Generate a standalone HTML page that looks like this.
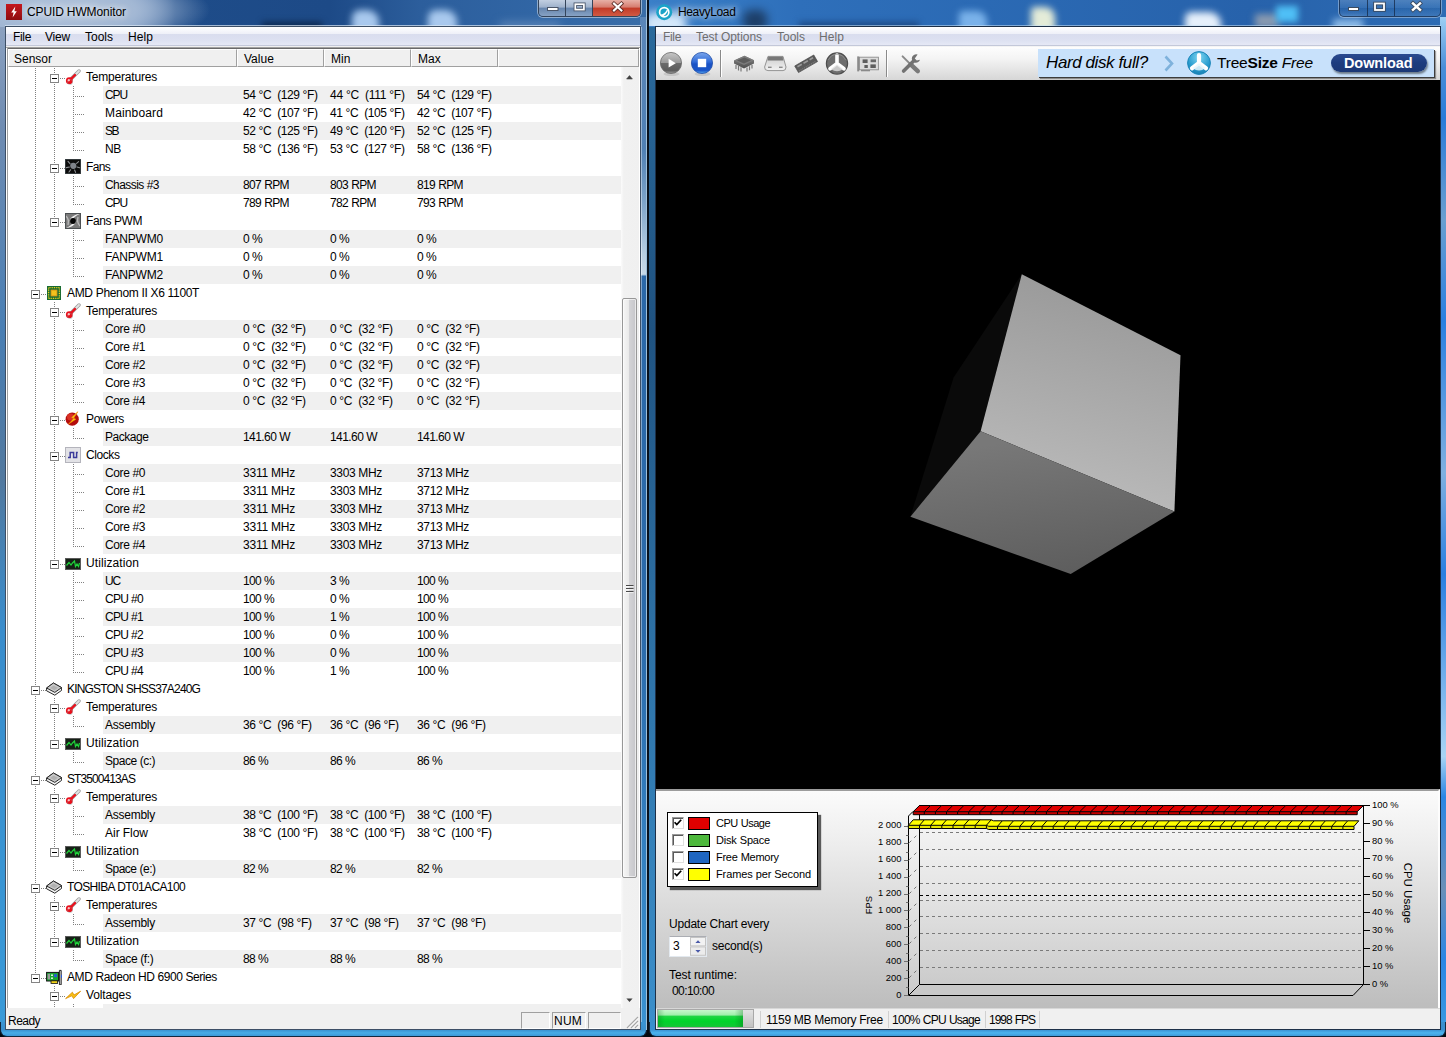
<!DOCTYPE html>
<html><head><meta charset="utf-8"><title>Desktop</title>
<style>
html,body{margin:0;padding:0}
body{width:1446px;height:1037px;position:relative;overflow:hidden;background:#05090f;font:12px/16px "Liberation Sans",sans-serif;color:#000}
div,span,svg{position:absolute;box-sizing:border-box}
.t{white-space:pre;line-height:16px;height:16px}
.g{background:#f0f0f0;left:103px;width:518px;height:18px}
.vl{width:1px;background-image:repeating-linear-gradient(to bottom,#808080 0 1px,transparent 1px 2px)}
.hl{height:1px;background-image:repeating-linear-gradient(to right,#808080 0 1px,transparent 1px 2px)}
.bx{width:9px;height:9px;border:1px solid #848484;background:#fff}
.bx:after{content:"";position:absolute;left:1px;top:3px;width:5px;height:1px;background:#000}
.hc{top:49px;height:18px;background:#f0f0f0;border-left:1px solid #fff;border-top:1px solid #fff;border-right:1px solid #a0a0a0;border-bottom:1px solid #a0a0a0}
.pane{top:1012px;height:17px;border-left:1px solid #a0a0a0;border-top:1px solid #a0a0a0;border-right:1px solid #fff;border-bottom:1px solid #fff}
.menu{height:19px;background:linear-gradient(to bottom,#fff 0,#f9fafd 12%,#eef0f8 36%,#d9ddee 38%,#dde1f1 70%,#e5e8f5 94%,#c3c8d9 95%,#c3c8d9 100%)}
</style></head><body>
<div id="lw" style="left:0;top:0;width:647px;height:1030px;background:
radial-gradient(ellipse 150px 40px at 60px 10px,#b4c5dc 0,#a3b8d4 50%,rgba(150,175,210,0) 100%),
linear-gradient(to right,#8fa9cc 0,#7c9ac4 130px,#1e4c89 175px,#1d4a87 330px,#2c5e9c 420px,#3166a5 540px,#3a6ea8 647px);"></div><div style="left:0;top:0;width:647px;height:26px;overflow:hidden"><div style="left:352px;top:10px;width:27px;height:22px;background:#a9c9ee;filter:blur(3.5px);border-radius:8px 12px 0 0"></div><div style="left:428px;top:10px;width:29px;height:22px;background:#a9c9ee;filter:blur(3.5px);border-radius:8px 12px 0 0"></div><div style="left:262px;top:22px;width:60px;height:8px;background:#0e2a50;filter:blur(3px)"></div><div style="left:500px;top:22px;width:60px;height:8px;background:#5d86b8;filter:blur(4px)"></div></div><div style="left:0;top:27px;width:6px;height:1003px;background:linear-gradient(to bottom,#8ba1c0 0,#6f8cb2 10%,#4a7fb4 30%,#52799f 45%,#3a8dcc 60%,#3a9ad8 100%)"></div><div style="left:640px;top:17px;width:7px;height:1013px;background:linear-gradient(to bottom,#5b86b8 0,#4f80b4 13%,#7ba2c8 18%,#b9cfe2 23.5%,#c6d8e8 25.4%,#2b68a8 25.6%,#2b6aaa 60%,#3a92d2 100%)"></div><div style="left:641px;top:27px;width:1px;height:1003px;background:rgba(255,255,255,.4)"></div><div style="left:0;top:1022px;width:647px;height:15px;background:linear-gradient(to bottom,#3a94d4 0,#3a8fce 55%,#49acE6 78%,#3d98d8 100%);border-radius:0 0 7px 7px;border:1px solid #14283e;border-top:none"></div><div style="left:646px;top:0;width:3px;height:1030px;background:linear-gradient(to right,#9fc0dc 0,#9fc0dc 33%,#08111c 34%,#08111c 100%)"></div><div style="left:5px;top:26px;width:636px;height:1004px;border:1px solid #3d4f66;background:#fff"></div><div style="left:5px;top:25px;width:636px;height:1px;background:rgba(220,232,245,.7)"></div><svg style="left:6px;top:4px" width="16" height="16" viewBox="0 0 16 16"><defs><linearGradient id="ri" x1="0" y1="0" x2="0" y2="1"><stop offset="0" stop-color="#c4161c"/><stop offset="1" stop-color="#8e0c10"/></linearGradient></defs><rect width="16" height="16" fill="url(#ri)"/><path d="M9.3 2.6 L5.2 8.6 L7.6 8.6 L6.6 13.4 L10.8 7.2 L8.4 7.2 Z" fill="#fff"/></svg><span class="t " style="left:27px;top:4px;letter-spacing:-0.10px;word-spacing:-0.24px;text-shadow:0 0 6px rgba(255,255,255,.9),0 0 10px rgba(255,255,255,.7);">CPUID HWMonitor</span><div style="left:538px;top:0;width:103px;height:17px;border:1px solid #34445a;border-top:none;border-radius:0 0 5px 5px;overflow:hidden;box-shadow:0 0 0 1px rgba(255,255,255,.45)">
<div style="left:0;top:0;width:27px;height:16px;background:linear-gradient(to bottom,#c2cfe1 0,#9fb2cc 45%,#6685ad 50%,#87a2c4 100%);border-right:1px solid #34445a"></div>
<div style="left:27px;top:0;width:27px;height:16px;background:linear-gradient(to bottom,#c2cfe1 0,#9fb2cc 45%,#6685ad 50%,#87a2c4 100%);border-right:1px solid #34445a"></div>
<div style="left:54px;top:0;width:48px;height:16px;background:linear-gradient(to bottom,#e7b0a6 0,#d67c6e 45%,#c23a27 50%,#d15a43 100%)"></div>
</div><svg style="left:538px;top:0" width="103" height="17" viewBox="0 0 103 17"><rect x="9.5" y="7.5" width="10.5" height="3" fill="#fff" stroke="#4a5568" stroke-width="1"/><rect x="37.3" y="4.2" width="8.6" height="5.4" fill="none" stroke="#4a5568" stroke-width="3.4"/><rect x="37.3" y="4.2" width="8.6" height="5.4" fill="none" stroke="#fff" stroke-width="1.7"/><path d="M76 3.6 L83.4 10.4 M83.4 3.6 L76 10.4" stroke="#5a2a24" stroke-width="3.8" stroke-linecap="square"/><path d="M76 3.6 L83.4 10.4 M83.4 3.6 L76 10.4" stroke="#fff" stroke-width="2.1" stroke-linecap="square"/></svg><div class="menu" style="left:6px;top:27px;width:634px"></div><div style="left:6px;top:46px;width:634px;height:1px;background:#f0f0f0"></div><span class="t " style="left:13px;top:29px;letter-spacing:-0.34px;">File</span><span class="t " style="left:45px;top:29px;letter-spacing:-0.20px;">View</span><span class="t " style="left:85px;top:29px;letter-spacing:-0.00px;">Tools</span><span class="t " style="left:128px;top:29px;letter-spacing:0.08px;">Help</span><div style="left:6px;top:47px;width:634px;height:1px;background:#a0a0a0"></div><div style="left:7px;top:48px;width:632px;height:1px;background:#696969"></div><div style="left:7px;top:48px;width:1px;height:961px;background:#a0a0a0"></div><div class="hc" style="left:8px;width:229px"></div><span class="t" style="left:14px;top:51px">Sensor</span><div class="hc" style="left:237px;width:87px"></div><span class="t" style="left:244px;top:51px">Value</span><div class="hc" style="left:324px;width:87px"></div><span class="t" style="left:331px;top:51px">Min</span><div class="hc" style="left:411px;width:87px"></div><span class="t" style="left:418px;top:51px">Max</span><div class="hc" style="left:498px;width:141px"></div><div id="list" style="left:8px;top:67px;width:631px;height:941px;overflow:hidden;background:#fff"><div class="g" style="left:95px;top:19px"></div><div class="g" style="left:95px;top:55px"></div><div class="g" style="left:95px;top:109px"></div><div class="g" style="left:95px;top:163px"></div><div class="g" style="left:95px;top:199px"></div><div class="g" style="left:95px;top:253px"></div><div class="g" style="left:95px;top:289px"></div><div class="g" style="left:95px;top:325px"></div><div class="g" style="left:95px;top:361px"></div><div class="g" style="left:95px;top:397px"></div><div class="g" style="left:95px;top:433px"></div><div class="g" style="left:95px;top:469px"></div><div class="g" style="left:95px;top:505px"></div><div class="g" style="left:95px;top:541px"></div><div class="g" style="left:95px;top:577px"></div><div class="g" style="left:95px;top:649px"></div><div class="g" style="left:95px;top:685px"></div><div class="g" style="left:95px;top:739px"></div><div class="g" style="left:95px;top:793px"></div><div class="g" style="left:95px;top:847px"></div><div class="g" style="left:95px;top:883px"></div><div class="g" style="left:95px;top:937px"></div><div class="vl" style="left:27px;top:-1px;height:913px"></div><div class="vl" style="left:46px;top:-1px;height:157px"></div><div class="vl" style="left:46px;top:235px;height:263px"></div><div class="vl" style="left:46px;top:631px;height:47px"></div><div class="vl" style="left:46px;top:721px;height:65px"></div><div class="vl" style="left:46px;top:829px;height:47px"></div><div class="vl" style="left:46px;top:919px;height:24px"></div><div class="vl" style="left:65px;top:19px;height:65px"></div><div class="vl" style="left:65px;top:109px;height:29px"></div><div class="vl" style="left:65px;top:163px;height:47px"></div><div class="vl" style="left:65px;top:253px;height:83px"></div><div class="vl" style="left:65px;top:361px;height:11px"></div><div class="vl" style="left:65px;top:397px;height:83px"></div><div class="vl" style="left:65px;top:505px;height:101px"></div><div class="vl" style="left:65px;top:649px;height:11px"></div><div class="vl" style="left:65px;top:685px;height:11px"></div><div class="vl" style="left:65px;top:739px;height:29px"></div><div class="vl" style="left:65px;top:793px;height:11px"></div><div class="vl" style="left:65px;top:847px;height:11px"></div><div class="vl" style="left:65px;top:883px;height:11px"></div><div class="vl" style="left:65px;top:937px;height:6px"></div><div class="hl" style="left:52px;top:11px;width:5px"></div><div class="bx" style="left:42px;top:7px"></div><svg style="left:57px;top:2px" width="16" height="16" viewBox="0 0 16 16"><path d="M5.2 10.8 L14 2" stroke="#9a9a9a" stroke-width="3.4" stroke-linecap="round"/><path d="M5.2 10.8 L14 2" stroke="#e4e4e4" stroke-width="1.8" stroke-linecap="round"/><path d="M5 11 L10 6" stroke="#e8101c" stroke-width="2.4" stroke-linecap="round"/><circle cx="4.3" cy="11.7" r="3.4" fill="#ea0f1b"/><circle cx="5" cy="13" r="2.6" fill="none" stroke="#8c8c8c" stroke-width=".7" opacity=".6"/><path d="M2.6 11.2h2.4M3.8 10v2.4" stroke="#ffd0d0" stroke-width="1"/></svg><span class="t " style="left:78px;top:2px;letter-spacing:-0.20px;">Temperatures</span><div class="hl" style="left:65px;top:29px;width:11px"></div><span class="t " style="left:97px;top:20px;letter-spacing:-1.11px;">CPU</span><span class="t " style="left:235px;top:20px;letter-spacing:-0.40px;word-spacing:0.06px;">54 °C  (129 °F)</span><span class="t " style="left:322px;top:20px;letter-spacing:-0.23px;word-spacing:-0.10px;">44 °C  (111 °F)</span><span class="t " style="left:409px;top:20px;letter-spacing:-0.40px;word-spacing:0.06px;">54 °C  (129 °F)</span><div class="hl" style="left:65px;top:47px;width:11px"></div><span class="t " style="left:97px;top:38px;letter-spacing:0.14px;">Mainboard</span><span class="t " style="left:235px;top:38px;letter-spacing:-0.40px;word-spacing:0.06px;">42 °C  (107 °F)</span><span class="t " style="left:322px;top:38px;letter-spacing:-0.40px;word-spacing:0.06px;">41 °C  (105 °F)</span><span class="t " style="left:409px;top:38px;letter-spacing:-0.40px;word-spacing:0.06px;">42 °C  (107 °F)</span><div class="hl" style="left:65px;top:65px;width:11px"></div><span class="t " style="left:97px;top:56px;letter-spacing:-1.51px;">SB</span><span class="t " style="left:235px;top:56px;letter-spacing:-0.40px;word-spacing:0.06px;">52 °C  (125 °F)</span><span class="t " style="left:322px;top:56px;letter-spacing:-0.40px;word-spacing:0.06px;">49 °C  (120 °F)</span><span class="t " style="left:409px;top:56px;letter-spacing:-0.40px;word-spacing:0.06px;">52 °C  (125 °F)</span><div class="hl" style="left:65px;top:83px;width:11px"></div><span class="t " style="left:97px;top:74px;letter-spacing:-0.34px;">NB</span><span class="t " style="left:235px;top:74px;letter-spacing:-0.40px;word-spacing:0.06px;">58 °C  (136 °F)</span><span class="t " style="left:322px;top:74px;letter-spacing:-0.40px;word-spacing:0.06px;">53 °C  (127 °F)</span><span class="t " style="left:409px;top:74px;letter-spacing:-0.40px;word-spacing:0.06px;">58 °C  (136 °F)</span><div class="hl" style="left:52px;top:101px;width:5px"></div><div class="bx" style="left:42px;top:97px"></div><svg style="left:57px;top:92px" width="16" height="16" viewBox="0 0 16 16"><rect x="0" y="0" width="16" height="15" rx=".8" fill="#0c0c0c"/><rect x=".5" y=".5" width="15" height="14" fill="none" stroke="#3c4448" stroke-width=".8"/><path d="M3 2.4 L5 4.6 M13.6 2.6 L11.6 4.4 M14.6 8.8 L12 8 M10.6 13.4 L9.6 11 M4 13 L5.6 10.8 M1.4 8.6 L4.4 8" stroke="#b9bcc0" stroke-width="1.1" stroke-linecap="round" opacity=".75"/><circle cx="8.3" cy="6.8" r="3.1" fill="#7f838a"/></svg><span class="t " style="left:78px;top:92px;letter-spacing:-0.67px;">Fans</span><div class="hl" style="left:65px;top:119px;width:11px"></div><span class="t " style="left:97px;top:110px;letter-spacing:-0.56px;word-spacing:0.22px;">Chassis #3</span><span class="t " style="left:235px;top:110px;letter-spacing:-0.62px;word-spacing:0.28px;">807 RPM</span><span class="t " style="left:322px;top:110px;letter-spacing:-0.62px;word-spacing:0.28px;">803 RPM</span><span class="t " style="left:409px;top:110px;letter-spacing:-0.62px;word-spacing:0.28px;">819 RPM</span><div class="hl" style="left:65px;top:137px;width:11px"></div><span class="t " style="left:97px;top:128px;letter-spacing:-1.11px;">CPU</span><span class="t " style="left:235px;top:128px;letter-spacing:-0.62px;word-spacing:0.28px;">789 RPM</span><span class="t " style="left:322px;top:128px;letter-spacing:-0.62px;word-spacing:0.28px;">782 RPM</span><span class="t " style="left:409px;top:128px;letter-spacing:-0.62px;word-spacing:0.28px;">793 RPM</span><div class="hl" style="left:52px;top:155px;width:5px"></div><div class="bx" style="left:42px;top:151px"></div><svg style="left:57px;top:146px" width="16" height="16" viewBox="0 0 16 16"><rect x="0" y="0" width="16" height="16" fill="#7a7a7a"/><path d="M15 .8 C10 1.6 6.2 3.6 4.6 7.4 L6.4 8.4 C8 5 10.8 2.8 15 .8 Z M1 15.2 C6 14.4 9.8 12.4 11.4 8.6 L9.6 7.6 C8 11 5.2 13.2 1 15.2 Z" fill="#f0f0f0"/><path d="M1 3 C3 5 4 8 3 12 M15 13 C13 11 12 8 13 4" stroke="#b8b8b8" stroke-width="1.4" fill="none"/><rect x=".5" y=".5" width="15" height="15" fill="none" stroke="#4c5052" stroke-width="1"/><circle cx="8" cy="8" r="2.9" fill="#060606"/></svg><span class="t " style="left:78px;top:146px;letter-spacing:-0.43px;word-spacing:0.09px;">Fans PWM</span><div class="hl" style="left:65px;top:173px;width:11px"></div><span class="t " style="left:97px;top:164px;letter-spacing:-0.19px;">FANPWM0</span><span class="t " style="left:235px;top:164px;letter-spacing:-0.68px;word-spacing:0.34px;">0 %</span><span class="t " style="left:322px;top:164px;letter-spacing:-0.68px;word-spacing:0.34px;">0 %</span><span class="t " style="left:409px;top:164px;letter-spacing:-0.68px;word-spacing:0.34px;">0 %</span><div class="hl" style="left:65px;top:191px;width:11px"></div><span class="t " style="left:97px;top:182px;letter-spacing:-0.19px;">FANPWM1</span><span class="t " style="left:235px;top:182px;letter-spacing:-0.68px;word-spacing:0.34px;">0 %</span><span class="t " style="left:322px;top:182px;letter-spacing:-0.68px;word-spacing:0.34px;">0 %</span><span class="t " style="left:409px;top:182px;letter-spacing:-0.68px;word-spacing:0.34px;">0 %</span><div class="hl" style="left:65px;top:209px;width:11px"></div><span class="t " style="left:97px;top:200px;letter-spacing:-0.19px;">FANPWM2</span><span class="t " style="left:235px;top:200px;letter-spacing:-0.68px;word-spacing:0.34px;">0 %</span><span class="t " style="left:322px;top:200px;letter-spacing:-0.68px;word-spacing:0.34px;">0 %</span><span class="t " style="left:409px;top:200px;letter-spacing:-0.68px;word-spacing:0.34px;">0 %</span><div class="hl" style="left:33px;top:227px;width:5px"></div><div class="bx" style="left:23px;top:223px"></div><svg style="left:38px;top:218px" width="16" height="16" viewBox="0 0 16 16"><rect x="1" y="1" width="14" height="14" fill="#176a33"/><rect x="2.6" y="2.6" width="10.8" height="10.8" fill="none" stroke="#f2d21a" stroke-width="1.3" stroke-dasharray="1 .8"/><rect x="4.6" y="4.6" width="6.8" height="6.8" fill="#d99a17"/><rect x="5.6" y="5.6" width="4.8" height="4.8" fill="#f3c21d"/></svg><span class="t " style="left:59px;top:218px;letter-spacing:-0.32px;word-spacing:-0.01px;">AMD Phenom II X6 1100T</span><div class="hl" style="left:52px;top:245px;width:5px"></div><div class="bx" style="left:42px;top:241px"></div><svg style="left:57px;top:236px" width="16" height="16" viewBox="0 0 16 16"><path d="M5.2 10.8 L14 2" stroke="#9a9a9a" stroke-width="3.4" stroke-linecap="round"/><path d="M5.2 10.8 L14 2" stroke="#e4e4e4" stroke-width="1.8" stroke-linecap="round"/><path d="M5 11 L10 6" stroke="#e8101c" stroke-width="2.4" stroke-linecap="round"/><circle cx="4.3" cy="11.7" r="3.4" fill="#ea0f1b"/><circle cx="5" cy="13" r="2.6" fill="none" stroke="#8c8c8c" stroke-width=".7" opacity=".6"/><path d="M2.6 11.2h2.4M3.8 10v2.4" stroke="#ffd0d0" stroke-width="1"/></svg><span class="t " style="left:78px;top:236px;letter-spacing:-0.20px;">Temperatures</span><div class="hl" style="left:65px;top:263px;width:11px"></div><span class="t " style="left:97px;top:254px;letter-spacing:-0.39px;word-spacing:0.06px;">Core #0</span><span class="t " style="left:235px;top:254px;letter-spacing:-0.33px;word-spacing:-0.00px;">0 °C  (32 °F)</span><span class="t " style="left:322px;top:254px;letter-spacing:-0.33px;word-spacing:-0.00px;">0 °C  (32 °F)</span><span class="t " style="left:409px;top:254px;letter-spacing:-0.33px;word-spacing:-0.00px;">0 °C  (32 °F)</span><div class="hl" style="left:65px;top:281px;width:11px"></div><span class="t " style="left:97px;top:272px;letter-spacing:-0.39px;word-spacing:0.06px;">Core #1</span><span class="t " style="left:235px;top:272px;letter-spacing:-0.33px;word-spacing:-0.00px;">0 °C  (32 °F)</span><span class="t " style="left:322px;top:272px;letter-spacing:-0.33px;word-spacing:-0.00px;">0 °C  (32 °F)</span><span class="t " style="left:409px;top:272px;letter-spacing:-0.33px;word-spacing:-0.00px;">0 °C  (32 °F)</span><div class="hl" style="left:65px;top:299px;width:11px"></div><span class="t " style="left:97px;top:290px;letter-spacing:-0.39px;word-spacing:0.06px;">Core #2</span><span class="t " style="left:235px;top:290px;letter-spacing:-0.33px;word-spacing:-0.00px;">0 °C  (32 °F)</span><span class="t " style="left:322px;top:290px;letter-spacing:-0.33px;word-spacing:-0.00px;">0 °C  (32 °F)</span><span class="t " style="left:409px;top:290px;letter-spacing:-0.33px;word-spacing:-0.00px;">0 °C  (32 °F)</span><div class="hl" style="left:65px;top:317px;width:11px"></div><span class="t " style="left:97px;top:308px;letter-spacing:-0.39px;word-spacing:0.06px;">Core #3</span><span class="t " style="left:235px;top:308px;letter-spacing:-0.33px;word-spacing:-0.00px;">0 °C  (32 °F)</span><span class="t " style="left:322px;top:308px;letter-spacing:-0.33px;word-spacing:-0.00px;">0 °C  (32 °F)</span><span class="t " style="left:409px;top:308px;letter-spacing:-0.33px;word-spacing:-0.00px;">0 °C  (32 °F)</span><div class="hl" style="left:65px;top:335px;width:11px"></div><span class="t " style="left:97px;top:326px;letter-spacing:-0.39px;word-spacing:0.06px;">Core #4</span><span class="t " style="left:235px;top:326px;letter-spacing:-0.33px;word-spacing:-0.00px;">0 °C  (32 °F)</span><span class="t " style="left:322px;top:326px;letter-spacing:-0.33px;word-spacing:-0.00px;">0 °C  (32 °F)</span><span class="t " style="left:409px;top:326px;letter-spacing:-0.33px;word-spacing:-0.00px;">0 °C  (32 °F)</span><div class="hl" style="left:52px;top:353px;width:5px"></div><div class="bx" style="left:42px;top:349px"></div><svg style="left:57px;top:344px" width="16" height="16" viewBox="0 0 16 16"><circle cx="7.2" cy="8.2" r="6.6" fill="#b40d0d"/><circle cx="5.6" cy="6" r="3.6" fill="#e23a2a" opacity=".8"/><path d="M12.8 0.8 L6.6 6.6 L8.8 7.4 L3.6 13 L10.8 8.2 L8.6 7.2 Z" fill="#ffd91a" stroke="#f08a00" stroke-width=".7"/></svg><span class="t " style="left:78px;top:344px;letter-spacing:-0.34px;">Powers</span><div class="hl" style="left:65px;top:371px;width:11px"></div><span class="t " style="left:97px;top:362px;letter-spacing:-0.46px;">Package</span><span class="t " style="left:235px;top:362px;letter-spacing:-0.58px;word-spacing:0.24px;">141.60 W</span><span class="t " style="left:322px;top:362px;letter-spacing:-0.58px;word-spacing:0.24px;">141.60 W</span><span class="t " style="left:409px;top:362px;letter-spacing:-0.58px;word-spacing:0.24px;">141.60 W</span><div class="hl" style="left:52px;top:389px;width:5px"></div><div class="bx" style="left:42px;top:385px"></div><svg style="left:57px;top:380px" width="16" height="16" viewBox="0 0 16 16"><rect x=".5" y=".5" width="15" height="15" fill="#e2e2e6" stroke="#b4b4bc"/><path d="M3 10.5 H5.2 V5.5 H8.6 V10.5 H11.6 V5.5 H12.8" fill="none" stroke="#3a3a9a" stroke-width="1.5"/></svg><span class="t " style="left:78px;top:380px;letter-spacing:-0.42px;">Clocks</span><div class="hl" style="left:65px;top:407px;width:11px"></div><span class="t " style="left:97px;top:398px;letter-spacing:-0.39px;word-spacing:0.06px;">Core #0</span><span class="t " style="left:235px;top:398px;letter-spacing:-0.21px;word-spacing:-0.13px;">3311 MHz</span><span class="t " style="left:322px;top:398px;letter-spacing:-0.34px;word-spacing:0.00px;">3303 MHz</span><span class="t " style="left:409px;top:398px;letter-spacing:-0.34px;word-spacing:0.00px;">3713 MHz</span><div class="hl" style="left:65px;top:425px;width:11px"></div><span class="t " style="left:97px;top:416px;letter-spacing:-0.39px;word-spacing:0.06px;">Core #1</span><span class="t " style="left:235px;top:416px;letter-spacing:-0.21px;word-spacing:-0.13px;">3311 MHz</span><span class="t " style="left:322px;top:416px;letter-spacing:-0.34px;word-spacing:0.00px;">3303 MHz</span><span class="t " style="left:409px;top:416px;letter-spacing:-0.34px;word-spacing:0.00px;">3712 MHz</span><div class="hl" style="left:65px;top:443px;width:11px"></div><span class="t " style="left:97px;top:434px;letter-spacing:-0.39px;word-spacing:0.06px;">Core #2</span><span class="t " style="left:235px;top:434px;letter-spacing:-0.21px;word-spacing:-0.13px;">3311 MHz</span><span class="t " style="left:322px;top:434px;letter-spacing:-0.34px;word-spacing:0.00px;">3303 MHz</span><span class="t " style="left:409px;top:434px;letter-spacing:-0.34px;word-spacing:0.00px;">3713 MHz</span><div class="hl" style="left:65px;top:461px;width:11px"></div><span class="t " style="left:97px;top:452px;letter-spacing:-0.39px;word-spacing:0.06px;">Core #3</span><span class="t " style="left:235px;top:452px;letter-spacing:-0.21px;word-spacing:-0.13px;">3311 MHz</span><span class="t " style="left:322px;top:452px;letter-spacing:-0.34px;word-spacing:0.00px;">3303 MHz</span><span class="t " style="left:409px;top:452px;letter-spacing:-0.34px;word-spacing:0.00px;">3713 MHz</span><div class="hl" style="left:65px;top:479px;width:11px"></div><span class="t " style="left:97px;top:470px;letter-spacing:-0.39px;word-spacing:0.06px;">Core #4</span><span class="t " style="left:235px;top:470px;letter-spacing:-0.21px;word-spacing:-0.13px;">3311 MHz</span><span class="t " style="left:322px;top:470px;letter-spacing:-0.34px;word-spacing:0.00px;">3303 MHz</span><span class="t " style="left:409px;top:470px;letter-spacing:-0.34px;word-spacing:0.00px;">3713 MHz</span><div class="hl" style="left:52px;top:497px;width:5px"></div><div class="bx" style="left:42px;top:493px"></div><svg style="left:57px;top:488px" width="16" height="16" viewBox="0 0 16 16"><rect x=".5" y="3.5" width="15" height="11" fill="#162016" stroke="#5a5a5a" stroke-width="1"/><path d="M1.5 10.5 L4 7.5 L6 10 L7.5 8 L9.5 6 L10.5 11.5 L12 9 L13.5 11.5 L14.5 8" fill="none" stroke="#1fd43a" stroke-width="1.2"/></svg><span class="t " style="left:78px;top:488px;letter-spacing:0.09px;">Utilization</span><div class="hl" style="left:65px;top:515px;width:11px"></div><span class="t " style="left:97px;top:506px;letter-spacing:-1.17px;">UC</span><span class="t " style="left:235px;top:506px;letter-spacing:-0.67px;word-spacing:0.34px;">100 %</span><span class="t " style="left:322px;top:506px;letter-spacing:-0.68px;word-spacing:0.34px;">3 %</span><span class="t " style="left:409px;top:506px;letter-spacing:-0.67px;word-spacing:0.34px;">100 %</span><div class="hl" style="left:65px;top:533px;width:11px"></div><span class="t " style="left:97px;top:524px;letter-spacing:-0.74px;word-spacing:0.40px;">CPU #0</span><span class="t " style="left:235px;top:524px;letter-spacing:-0.67px;word-spacing:0.34px;">100 %</span><span class="t " style="left:322px;top:524px;letter-spacing:-0.68px;word-spacing:0.34px;">0 %</span><span class="t " style="left:409px;top:524px;letter-spacing:-0.67px;word-spacing:0.34px;">100 %</span><div class="hl" style="left:65px;top:551px;width:11px"></div><span class="t " style="left:97px;top:542px;letter-spacing:-0.74px;word-spacing:0.40px;">CPU #1</span><span class="t " style="left:235px;top:542px;letter-spacing:-0.67px;word-spacing:0.34px;">100 %</span><span class="t " style="left:322px;top:542px;letter-spacing:-0.68px;word-spacing:0.34px;">1 %</span><span class="t " style="left:409px;top:542px;letter-spacing:-0.67px;word-spacing:0.34px;">100 %</span><div class="hl" style="left:65px;top:569px;width:11px"></div><span class="t " style="left:97px;top:560px;letter-spacing:-0.74px;word-spacing:0.40px;">CPU #2</span><span class="t " style="left:235px;top:560px;letter-spacing:-0.67px;word-spacing:0.34px;">100 %</span><span class="t " style="left:322px;top:560px;letter-spacing:-0.68px;word-spacing:0.34px;">0 %</span><span class="t " style="left:409px;top:560px;letter-spacing:-0.67px;word-spacing:0.34px;">100 %</span><div class="hl" style="left:65px;top:587px;width:11px"></div><span class="t " style="left:97px;top:578px;letter-spacing:-0.74px;word-spacing:0.40px;">CPU #3</span><span class="t " style="left:235px;top:578px;letter-spacing:-0.67px;word-spacing:0.34px;">100 %</span><span class="t " style="left:322px;top:578px;letter-spacing:-0.68px;word-spacing:0.34px;">0 %</span><span class="t " style="left:409px;top:578px;letter-spacing:-0.67px;word-spacing:0.34px;">100 %</span><div class="hl" style="left:65px;top:605px;width:11px"></div><span class="t " style="left:97px;top:596px;letter-spacing:-0.74px;word-spacing:0.40px;">CPU #4</span><span class="t " style="left:235px;top:596px;letter-spacing:-0.67px;word-spacing:0.34px;">100 %</span><span class="t " style="left:322px;top:596px;letter-spacing:-0.68px;word-spacing:0.34px;">1 %</span><span class="t " style="left:409px;top:596px;letter-spacing:-0.67px;word-spacing:0.34px;">100 %</span><div class="hl" style="left:33px;top:623px;width:5px"></div><div class="bx" style="left:23px;top:619px"></div><svg style="left:38px;top:614px" width="16" height="16" viewBox="0 0 16 16"><path d="M.6 7 L7.4 2 L15.6 6.6 L15.6 9.4 L8.8 14.2 L.6 9.8 Z" fill="#f4f4f4" stroke="#2a2a2a" stroke-width="1" stroke-linejoin="round"/><path d="M.6 7 L7.4 2 L15.6 6.6 L8.8 11.4 Z" fill="#c9c9c9" stroke="#2a2a2a" stroke-width="1" stroke-linejoin="round"/><path d="M4 7 L7.6 4.4 L12 6.8 L8.6 9.2 Z" fill="#b0b0b0"/></svg><span class="t " style="left:59px;top:614px;letter-spacing:-0.83px;word-spacing:0.50px;">KINGSTON SHSS37A240G</span><div class="hl" style="left:52px;top:641px;width:5px"></div><div class="bx" style="left:42px;top:637px"></div><svg style="left:57px;top:632px" width="16" height="16" viewBox="0 0 16 16"><path d="M5.2 10.8 L14 2" stroke="#9a9a9a" stroke-width="3.4" stroke-linecap="round"/><path d="M5.2 10.8 L14 2" stroke="#e4e4e4" stroke-width="1.8" stroke-linecap="round"/><path d="M5 11 L10 6" stroke="#e8101c" stroke-width="2.4" stroke-linecap="round"/><circle cx="4.3" cy="11.7" r="3.4" fill="#ea0f1b"/><circle cx="5" cy="13" r="2.6" fill="none" stroke="#8c8c8c" stroke-width=".7" opacity=".6"/><path d="M2.6 11.2h2.4M3.8 10v2.4" stroke="#ffd0d0" stroke-width="1"/></svg><span class="t " style="left:78px;top:632px;letter-spacing:-0.20px;">Temperatures</span><div class="hl" style="left:65px;top:659px;width:11px"></div><span class="t " style="left:97px;top:650px;letter-spacing:-0.25px;">Assembly</span><span class="t " style="left:235px;top:650px;letter-spacing:-0.37px;word-spacing:0.03px;">36 °C  (96 °F)</span><span class="t " style="left:322px;top:650px;letter-spacing:-0.37px;word-spacing:0.03px;">36 °C  (96 °F)</span><span class="t " style="left:409px;top:650px;letter-spacing:-0.37px;word-spacing:0.03px;">36 °C  (96 °F)</span><div class="hl" style="left:52px;top:677px;width:5px"></div><div class="bx" style="left:42px;top:673px"></div><svg style="left:57px;top:668px" width="16" height="16" viewBox="0 0 16 16"><rect x=".5" y="3.5" width="15" height="11" fill="#162016" stroke="#5a5a5a" stroke-width="1"/><path d="M1.5 10.5 L4 7.5 L6 10 L7.5 8 L9.5 6 L10.5 11.5 L12 9 L13.5 11.5 L14.5 8" fill="none" stroke="#1fd43a" stroke-width="1.2"/></svg><span class="t " style="left:78px;top:668px;letter-spacing:0.09px;">Utilization</span><div class="hl" style="left:65px;top:695px;width:11px"></div><span class="t " style="left:97px;top:686px;letter-spacing:-0.48px;word-spacing:0.15px;">Space (c:)</span><span class="t " style="left:235px;top:686px;letter-spacing:-0.67px;word-spacing:0.34px;">86 %</span><span class="t " style="left:322px;top:686px;letter-spacing:-0.67px;word-spacing:0.34px;">86 %</span><span class="t " style="left:409px;top:686px;letter-spacing:-0.67px;word-spacing:0.34px;">86 %</span><div class="hl" style="left:33px;top:713px;width:5px"></div><div class="bx" style="left:23px;top:709px"></div><svg style="left:38px;top:704px" width="16" height="16" viewBox="0 0 16 16"><path d="M.6 7 L7.4 2 L15.6 6.6 L15.6 9.4 L8.8 14.2 L.6 9.8 Z" fill="#f4f4f4" stroke="#2a2a2a" stroke-width="1" stroke-linejoin="round"/><path d="M.6 7 L7.4 2 L15.6 6.6 L8.8 11.4 Z" fill="#c9c9c9" stroke="#2a2a2a" stroke-width="1" stroke-linejoin="round"/><path d="M4 7 L7.6 4.4 L12 6.8 L8.6 9.2 Z" fill="#b0b0b0"/></svg><span class="t " style="left:59px;top:704px;letter-spacing:-0.91px;">ST3500413AS</span><div class="hl" style="left:52px;top:731px;width:5px"></div><div class="bx" style="left:42px;top:727px"></div><svg style="left:57px;top:722px" width="16" height="16" viewBox="0 0 16 16"><path d="M5.2 10.8 L14 2" stroke="#9a9a9a" stroke-width="3.4" stroke-linecap="round"/><path d="M5.2 10.8 L14 2" stroke="#e4e4e4" stroke-width="1.8" stroke-linecap="round"/><path d="M5 11 L10 6" stroke="#e8101c" stroke-width="2.4" stroke-linecap="round"/><circle cx="4.3" cy="11.7" r="3.4" fill="#ea0f1b"/><circle cx="5" cy="13" r="2.6" fill="none" stroke="#8c8c8c" stroke-width=".7" opacity=".6"/><path d="M2.6 11.2h2.4M3.8 10v2.4" stroke="#ffd0d0" stroke-width="1"/></svg><span class="t " style="left:78px;top:722px;letter-spacing:-0.20px;">Temperatures</span><div class="hl" style="left:65px;top:749px;width:11px"></div><span class="t " style="left:97px;top:740px;letter-spacing:-0.25px;">Assembly</span><span class="t " style="left:235px;top:740px;letter-spacing:-0.40px;word-spacing:0.06px;">38 °C  (100 °F)</span><span class="t " style="left:322px;top:740px;letter-spacing:-0.40px;word-spacing:0.06px;">38 °C  (100 °F)</span><span class="t " style="left:409px;top:740px;letter-spacing:-0.40px;word-spacing:0.06px;">38 °C  (100 °F)</span><div class="hl" style="left:65px;top:767px;width:11px"></div><span class="t " style="left:97px;top:758px;letter-spacing:-0.00px;word-spacing:-0.33px;">Air Flow</span><span class="t " style="left:235px;top:758px;letter-spacing:-0.40px;word-spacing:0.06px;">38 °C  (100 °F)</span><span class="t " style="left:322px;top:758px;letter-spacing:-0.40px;word-spacing:0.06px;">38 °C  (100 °F)</span><span class="t " style="left:409px;top:758px;letter-spacing:-0.40px;word-spacing:0.06px;">38 °C  (100 °F)</span><div class="hl" style="left:52px;top:785px;width:5px"></div><div class="bx" style="left:42px;top:781px"></div><svg style="left:57px;top:776px" width="16" height="16" viewBox="0 0 16 16"><rect x=".5" y="3.5" width="15" height="11" fill="#162016" stroke="#5a5a5a" stroke-width="1"/><path d="M1.5 10.5 L4 7.5 L6 10 L7.5 8 L9.5 6 L10.5 11.5 L12 9 L13.5 11.5 L14.5 8" fill="none" stroke="#1fd43a" stroke-width="1.2"/></svg><span class="t " style="left:78px;top:776px;letter-spacing:0.09px;">Utilization</span><div class="hl" style="left:65px;top:803px;width:11px"></div><span class="t " style="left:97px;top:794px;letter-spacing:-0.50px;word-spacing:0.17px;">Space (e:)</span><span class="t " style="left:235px;top:794px;letter-spacing:-0.67px;word-spacing:0.34px;">82 %</span><span class="t " style="left:322px;top:794px;letter-spacing:-0.67px;word-spacing:0.34px;">82 %</span><span class="t " style="left:409px;top:794px;letter-spacing:-0.67px;word-spacing:0.34px;">82 %</span><div class="hl" style="left:33px;top:821px;width:5px"></div><div class="bx" style="left:23px;top:817px"></div><svg style="left:38px;top:812px" width="16" height="16" viewBox="0 0 16 16"><path d="M.6 7 L7.4 2 L15.6 6.6 L15.6 9.4 L8.8 14.2 L.6 9.8 Z" fill="#f4f4f4" stroke="#2a2a2a" stroke-width="1" stroke-linejoin="round"/><path d="M.6 7 L7.4 2 L15.6 6.6 L8.8 11.4 Z" fill="#c9c9c9" stroke="#2a2a2a" stroke-width="1" stroke-linejoin="round"/><path d="M4 7 L7.6 4.4 L12 6.8 L8.6 9.2 Z" fill="#b0b0b0"/></svg><span class="t " style="left:59px;top:812px;letter-spacing:-0.64px;word-spacing:0.30px;">TOSHIBA DT01ACA100</span><div class="hl" style="left:52px;top:839px;width:5px"></div><div class="bx" style="left:42px;top:835px"></div><svg style="left:57px;top:830px" width="16" height="16" viewBox="0 0 16 16"><path d="M5.2 10.8 L14 2" stroke="#9a9a9a" stroke-width="3.4" stroke-linecap="round"/><path d="M5.2 10.8 L14 2" stroke="#e4e4e4" stroke-width="1.8" stroke-linecap="round"/><path d="M5 11 L10 6" stroke="#e8101c" stroke-width="2.4" stroke-linecap="round"/><circle cx="4.3" cy="11.7" r="3.4" fill="#ea0f1b"/><circle cx="5" cy="13" r="2.6" fill="none" stroke="#8c8c8c" stroke-width=".7" opacity=".6"/><path d="M2.6 11.2h2.4M3.8 10v2.4" stroke="#ffd0d0" stroke-width="1"/></svg><span class="t " style="left:78px;top:830px;letter-spacing:-0.20px;">Temperatures</span><div class="hl" style="left:65px;top:857px;width:11px"></div><span class="t " style="left:97px;top:848px;letter-spacing:-0.25px;">Assembly</span><span class="t " style="left:235px;top:848px;letter-spacing:-0.37px;word-spacing:0.03px;">37 °C  (98 °F)</span><span class="t " style="left:322px;top:848px;letter-spacing:-0.37px;word-spacing:0.03px;">37 °C  (98 °F)</span><span class="t " style="left:409px;top:848px;letter-spacing:-0.37px;word-spacing:0.03px;">37 °C  (98 °F)</span><div class="hl" style="left:52px;top:875px;width:5px"></div><div class="bx" style="left:42px;top:871px"></div><svg style="left:57px;top:866px" width="16" height="16" viewBox="0 0 16 16"><rect x=".5" y="3.5" width="15" height="11" fill="#162016" stroke="#5a5a5a" stroke-width="1"/><path d="M1.5 10.5 L4 7.5 L6 10 L7.5 8 L9.5 6 L10.5 11.5 L12 9 L13.5 11.5 L14.5 8" fill="none" stroke="#1fd43a" stroke-width="1.2"/></svg><span class="t " style="left:78px;top:866px;letter-spacing:0.09px;">Utilization</span><div class="hl" style="left:65px;top:893px;width:11px"></div><span class="t " style="left:97px;top:884px;letter-spacing:-0.36px;word-spacing:0.02px;">Space (f:)</span><span class="t " style="left:235px;top:884px;letter-spacing:-0.67px;word-spacing:0.34px;">88 %</span><span class="t " style="left:322px;top:884px;letter-spacing:-0.67px;word-spacing:0.34px;">88 %</span><span class="t " style="left:409px;top:884px;letter-spacing:-0.67px;word-spacing:0.34px;">88 %</span><div class="hl" style="left:33px;top:911px;width:5px"></div><div class="bx" style="left:23px;top:907px"></div><svg style="left:38px;top:902px" width="16" height="16" viewBox="0 0 16 16"><g transform="translate(0 .8)"><rect x=".6" y="2.6"width="12" height="8.6" fill="#18a532" stroke="#111" stroke-width="1"/><rect x="5" y="11" width="6.6" height="2.6" fill="#f0d21a" stroke="#111" stroke-width=".8"/><rect x="1.6" y="4" width="2.4" height="5.6" fill="#9a9a9a"/><rect x="8" y="4.4" width="3" height="3" fill="#2a5ad8"/><circle cx="6" cy="5.4" r=".9" fill="#fff"/><circle cx="6" cy="8.4" r=".9" fill="#fff"/><path d="M13.4 .6 L15.2 .6 L15.2 15 L13.4 15 Z" fill="#d8d8d8" stroke="#111" stroke-width=".9"/><rect x="15" y="5" width="1" height="3" fill="#2a5ad8"/></g></svg><span class="t " style="left:59px;top:902px;letter-spacing:-0.42px;word-spacing:0.08px;">AMD Radeon HD 6900 Series</span><div class="hl" style="left:52px;top:929px;width:5px"></div><div class="bx" style="left:42px;top:925px"></div><svg style="left:57px;top:920px" width="16" height="16" viewBox="0 0 16 16"><path transform="translate(0 1.6)" d="M.6 10 L7.4 3.6 L9 6.4 L15.6 2.6 L8.6 10 L6.8 7.2 Z" fill="#f7c015" stroke="#d98a00" stroke-width=".8" stroke-linejoin="round"/></svg><span class="t " style="left:78px;top:920px;letter-spacing:-0.13px;">Voltages</span><div class="hl" style="left:65px;top:947px;width:11px"></div></div><div style="left:621px;top:67px;width:18px;height:941px;background:linear-gradient(to right,#fbfbfb 0,#f1f1f1 15%,#f0f0f0 100%)"></div><div style="left:622px;top:298px;width:15px;height:580px;border:1px solid #979797;border-radius:2px;background:linear-gradient(to right,#f6f6f6 0,#eaeaea 45%,#d3d3d6 50%,#c6c6ca 100%);box-shadow:inset 0 0 0 1px rgba(255,255,255,.6)"></div><svg style="left:621px;top:67px" width="18" height="941" viewBox="0 0 18 941"><path d="M5.6 12 L8.5 8.6 L11.4 12 Z" fill="#404040" stroke="#404040" stroke-width=".6"/><path d="M5.4 931.6 L11.6 931.6 L8.5 935 Z" fill="#404040"/><path d="M5 518.5h7.5M5 521.5h7.5M5 524.5h7.5" stroke="#4a4a4a" stroke-width="1.2"/><path d="M5 519.6h7.5M5 522.6h7.5M5 525.6h7.5" stroke="#fff" stroke-width=".9" opacity=".8"/></svg><div style="left:6px;top:1008px;width:634px;height:21px;background:#f0f0f0"></div><span class="t " style="left:8px;top:1013px;letter-spacing:-0.54px;">Ready</span><div class="pane" style="left:521px;width:29px"></div><div class="pane" style="left:552px;width:34px"></div><div class="pane" style="left:588px;width:33px"></div><span class="t " style="left:554px;top:1013px;letter-spacing:0.22px;">NUM</span><svg style="left:625px;top:1015px" width="14" height="14" viewBox="0 0 14 14"><path d="M13 2 L2 13 M13 6 L6 13 M13 10 L10 13" stroke="#a8a8a8" stroke-width="1.2"/><path d="M13.8 2.8 L2.8 13.8 M13.8 6.8 L6.8 13.8 M13.8 10.8 L10.8 13.8" stroke="#fff" stroke-width=".8"/></svg><div id="rw" style="left:649px;top:0;width:797px;height:1030px;background:linear-gradient(to right,#3a7fc8 0,#2e6fba 150px,#2a68b2 400px,#2762ab 600px,#2d6cb4 797px);"></div><div style="left:649px;top:0;width:797px;height:26px;overflow:hidden">
<div style="left:-6px;top:12px;width:44px;height:24px;background:#d4e8fa;filter:blur(5px);border-radius:12px"></div>
<div style="left:94px;top:10px;width:24px;height:22px;background:#101c30;filter:blur(5px);border-radius:8px;opacity:.6"></div>
<div style="left:310px;top:11px;width:28px;height:22px;background:#7ab2ea;filter:blur(3.5px);border-radius:4px 10px 0 0"></div>
<div style="left:382px;top:7px;width:24px;height:26px;background:#e4ecd8;filter:blur(3.5px);border-radius:4px 10px 0 0"></div>
<div style="left:536px;top:12px;width:36px;height:20px;background:#e6f0fb;filter:blur(3.5px);border-radius:6px 12px 0 0"></div>
<div style="left:606px;top:14px;width:24px;height:14px;background:#8a9ab0;filter:blur(3.5px)"></div>
<div style="left:627px;top:6px;width:22px;height:16px;background:#4fc0f6;filter:blur(3px)"></div>
<div style="left:684px;top:19px;width:30px;height:12px;background:#8dbbe8;filter:blur(3.5px)"></div>
<div style="left:150px;top:22px;width:120px;height:8px;background:#1d4a86;filter:blur(3px)"></div>
</div><div style="left:649px;top:27px;width:7px;height:1003px;background:linear-gradient(to bottom,#2a6a9c 0,#1f5280 30%,#2d70a4 60%,#3b8fcb 100%)"></div><div style="left:1440px;top:17px;width:6px;height:1013px;background:linear-gradient(to bottom,#9fd0f4 0,#4a8ed8 5%,#2a7bd8 10%,#6a9fd0 20%,#2a7fe0 30%,#7fb0e0 45%,#2a7fe0 55%,#a8d4f4 73%,#2a86e4 77%,#6a90b8 86%,#2a86e4 93%,#3a9ae0 100%)"></div><div style="left:649px;top:1022px;width:797px;height:15px;background:linear-gradient(to bottom,#3a8fcb 0,#3a8fd0 55%,#4cb4ee 78%,#3d9ada 100%);border-radius:0 0 7px 7px;border:1px solid #14283e;border-top:none"></div><div style="left:655px;top:26px;width:786px;height:1004px;border:1px solid #1d3048;background:#000"></div><div style="left:655px;top:25px;width:786px;height:1px;background:rgba(200,225,245,.55)"></div><svg style="left:656px;top:4px" width="17" height="17" viewBox="0 0 17 17"><circle cx="8.2" cy="8.2" r="8" fill="#1ba3c8"/><circle cx="8.2" cy="8.2" r="4.6" fill="none" stroke="#fff" stroke-width="1.7"/><path d="M4.4 10.6 C7 10.4 9.4 8.6 11 5.4 L12 6.4 C10.6 10 8 12.4 5.6 12.2 Z" fill="#fff"/></svg><span class="t " style="left:678px;top:4px;letter-spacing:-0.36px;text-shadow:0 0 6px rgba(255,255,255,.85),0 0 10px rgba(255,255,255,.6);">HeavyLoad</span><div style="left:1339px;top:0;width:102px;height:17px;border:1px solid rgba(20,40,70,.75);border-top:none;border-radius:0 0 5px 5px;box-shadow:0 0 0 1px rgba(255,255,255,.35);background:linear-gradient(to bottom,rgba(255,255,255,.16),rgba(255,255,255,.06) 48%,rgba(0,0,0,.04) 50%,rgba(255,255,255,.08))">
<div style="left:27px;top:0;width:1px;height:16px;background:rgba(20,40,70,.75)"></div><div style="left:54px;top:0;width:1px;height:16px;background:rgba(20,40,70,.75)"></div></div><svg style="left:1339px;top:0" width="102" height="17" viewBox="0 0 102 17"><rect x="9.5" y="7.5" width="10" height="3" fill="#fff" stroke="#3a4a60" stroke-width="1"/><rect x="36" y="3.5" width="9" height="6.5" fill="none" stroke="#3a4a60" stroke-width="3.6"/><rect x="36" y="3.5" width="9" height="6.5" fill="none" stroke="#fff" stroke-width="1.8"/><path d="M74 3.4 L81 9.8 M81 3.4 L74 9.8" stroke="#3a4a60" stroke-width="4.2" stroke-linecap="square"/><path d="M74 3.4 L81 9.8 M81 3.4 L74 9.8" stroke="#fff" stroke-width="2.5" stroke-linecap="square"/></svg><div class="menu" style="left:656px;top:27px;width:784px"></div><div style="left:656px;top:46px;width:784px;height:1px;background:#f4f4f4"></div><span class="t " style="left:663px;top:29px;letter-spacing:-0.34px;color:#6e6e6e;">File</span><span class="t " style="left:696px;top:29px;letter-spacing:-0.03px;word-spacing:-0.30px;color:#6e6e6e;">Test Options</span><span class="t " style="left:777px;top:29px;letter-spacing:-0.00px;color:#6e6e6e;">Tools</span><span class="t " style="left:819px;top:29px;letter-spacing:0.08px;color:#6e6e6e;">Help</span><div style="left:656px;top:47px;width:784px;height:33px;background:linear-gradient(to bottom,#fdfdfd 0,#f4f4f4 35%,#e2e2e2 75%,#d6d6d6 100%)"></div><svg style="left:656px;top:47px" width="784" height="33" viewBox="656 47 784 33">
<defs>
<linearGradient id="gb" x1="0" y1="0" x2="0" y2="1"><stop offset="0" stop-color="#c6c6c6"/><stop offset=".48" stop-color="#9a9a9a"/><stop offset=".52" stop-color="#6a6a6a"/><stop offset=".85" stop-color="#5c5c5c"/><stop offset="1" stop-color="#9a9a9a"/></linearGradient>
<linearGradient id="bb" x1="0" y1="0" x2="0" y2="1"><stop offset="0" stop-color="#7aa6ec"/><stop offset=".45" stop-color="#2f6ad8"/><stop offset=".55" stop-color="#1a52c4"/><stop offset=".85" stop-color="#1a56c8"/><stop offset="1" stop-color="#58a8f0"/></linearGradient>
<linearGradient id="dk" x1="0" y1="0" x2="0" y2="1"><stop offset="0" stop-color="#8a8a8a"/><stop offset="1" stop-color="#4c4c4c"/></linearGradient>
<linearGradient id="lt" x1="0" y1="0" x2="0" y2="1"><stop offset="0" stop-color="#7a7a7a"/><stop offset=".3" stop-color="#d8d8d8"/><stop offset="1" stop-color="#f2f2f2"/></linearGradient>
</defs>
<ellipse cx="671.5" cy="74" rx="8" ry="2" fill="#000" opacity=".1"/><ellipse cx="702.5" cy="74" rx="8" ry="2" fill="#000" opacity=".1"/>
<circle cx="671" cy="63" r="10.6" fill="url(#gb)" stroke="#6a6a6a" stroke-width=".8"/><path d="M668.6 58.8 L675.8 63.2 L668.6 67.6 Z" fill="#fff"/>
<circle cx="702" cy="63" r="10.6" fill="url(#bb)" stroke="#2350a8" stroke-width=".8"/><rect x="697.8" y="58.8" width="8.4" height="8.4" fill="#fff"/>
<path d="M720.5 50 V77" stroke="#8a8a8a" stroke-width="1"/><path d="M721.5 50 V77" stroke="#fff" stroke-width="1"/>
<!-- chip -->
<path d="M734 60.5 L744.5 55.8 L754 60.2 L754 63.4 L744 68.4 L734 63.6 Z" fill="url(#dk)"/><path d="M734 60.5 L744.5 55.8 L754 60.2 L744 65 Z" fill="#7c7c7c"/><path d="M737 60.6 L744.4 57.4 L751 60.3 L744 63.6 Z" fill="#5c5c5c"/><path d="M736 65 v4 M738.5 66 v4.4 M741 67.2 v4.4 M747 67.4 v4 M749.5 66.2 v4 M752 65 v3.6" stroke="#777" stroke-width="1.2"/>
<!-- hdd -->
<path d="M768 56.4 H783 L786 67 Q786 70.6 783 70.6 H768 Q764.4 70.6 764.6 67 Z" fill="url(#lt)" stroke="#8a8a8a" stroke-width=".9"/><path d="M768.6 57 H782.4 L783.4 60.4 H767.6 Z" fill="#777"/><rect x="768" y="66.6" width="3.6" height="1.4" fill="#8a8a8a"/><rect x="779" y="66.6" width="3.6" height="1.4" fill="#8a8a8a"/>
<!-- ram -->
<g transform="rotate(-30 806 63.5)"><rect x="795" y="60" width="22" height="7.6" fill="#5a5a5a" stroke="#444" stroke-width=".6"/><path d="M797 62 h5 M804 62 h5 M811 62 h4" stroke="#9a9a9a" stroke-width="1.6"/><path d="M796 66.6 h20" stroke="#8c8c8c" stroke-width="1" stroke-dasharray="1 1"/></g>
<!-- treesize -->
<circle cx="837" cy="63.5" r="10.6" fill="#6e6e6e" stroke="#4e4e4e" stroke-width="1.2"/><path d="M837 55 V63.5 L830 68.8 M837 63.5 L844 68.8" stroke="#fff" stroke-width="3.6" stroke-linecap="round" fill="none"/><path d="M831 69 L837 64.4 L843 69 Q837 73.6 831 69Z" fill="#e0e0e0" opacity=".8"/><path d="M828.4 60 A9.4 9.4 0 0 1 845.6 60" fill="none" stroke="#9a9a9a" stroke-width="1" opacity=".7"/>
<!-- card -->
<rect x="859.4" y="57.2" width="19" height="12.6" fill="#dcdcdc" stroke="#8c8c8c" stroke-width=".9"/><rect x="857.2" y="56.4" width="2" height="15" fill="#8a8a8a"/><rect x="862.6" y="59.4" width="5" height="3.6" fill="#5e5e5e"/><rect x="870.6" y="59.4" width="5.4" height="2.8" fill="#6a6a6a"/><rect x="864.4" y="65" width="3.4" height="3" fill="#5e5e5e"/><rect x="870.4" y="64.4" width="5.4" height="3.6" fill="#5e5e5e"/><path d="M861 70.6 h9" stroke="#8a8a8a" stroke-width="1.4"/>
<path d="M886.5 50 V77" stroke="#8a8a8a" stroke-width="1"/><path d="M887.5 50 V77" stroke="#fff" stroke-width="1"/>
<!-- tools -->
<path d="M902.6 56.4 L909.6 63.4" stroke="#8a8a8a" stroke-width="2" stroke-linecap="round"/><path d="M910.6 64.4 L917.8 71.2" stroke="#7a7a7a" stroke-width="4.4" stroke-linecap="round"/>
<path d="M903.6 71 L913.6 61" stroke="#727272" stroke-width="3.6" stroke-linecap="round"/><path d="M917.6 54.6 A4.2 4.2 0 1 0 920 59.8 L916.8 60.6 L914.8 58.4 Z" fill="#727272"/>
</svg><div style="left:1038px;top:49px;width:396px;height:28px;background:#c8e1fb;box-shadow:1px 1px 0 #3c3c3c,2px 2px 1px rgba(0,0,0,.35)"></div><span class="t" style="left:1046px;top:52px;font:italic 17px/22px &quot;Liberation Sans&quot;,sans-serif;height:22px;letter-spacing:-.4px">Hard disk full?</span><svg style="left:1160px;top:50px" width="60" height="27" viewBox="1160 50 60 27"><path d="M1165.5 56.5 L1172 63.5 L1165.5 70.5" fill="none" stroke="#7fb2dc" stroke-width="2.6"/><defs><radialGradient id="tsb" cx=".5" cy=".25" r=".8"><stop offset="0" stop-color="#7fd4f0"/><stop offset=".6" stop-color="#2a9ed0"/><stop offset="1" stop-color="#167aae"/></radialGradient></defs><circle cx="1199" cy="63" r="11.4" fill="url(#tsb)" stroke="#1b86ba" stroke-width="1"/><path d="M1199 55 V63 L1192 68.2 M1199 63 L1206 68.2" stroke="#fff" stroke-width="4.2" stroke-linecap="round" fill="none"/><path d="M1192.6 68 L1199 63.2 L1205.4 68 Q1199 73 1192.6 68Z" fill="#e8f6fc" opacity=".85"/></svg><span class="t" style="left:1217px;top:52px;font:15.5px/22px &quot;Liberation Sans&quot;,sans-serif;height:22px;letter-spacing:-.2px">Tree<b>Size</b> <i>Free</i></span><div style="left:1331px;top:54px;width:96px;height:18px;border-radius:9px;background:linear-gradient(to bottom,#2a4a90,#1d3c7e 50%,#1b3876);box-shadow:1px 2px 2px rgba(0,0,0,.45)"></div><span class="t" style="left:1344px;top:54px;font:bold 14.5px/18px &quot;Liberation Sans&quot;,sans-serif;height:18px;color:#fff;letter-spacing:-.1px">Download</span><svg style="left:656px;top:80px" width="784" height="709" viewBox="656 80 784 709">
<defs><linearGradient id="c1" x1="1110" y1="300" x2="1060" y2="490" gradientUnits="userSpaceOnUse"><stop offset="0" stop-color="#9b9b9b"/><stop offset="1" stop-color="#b9b9b9"/></linearGradient>
<linearGradient id="c2" x1="1020" y1="440" x2="1040" y2="575" gradientUnits="userSpaceOnUse"><stop offset="0" stop-color="#787878"/><stop offset="1" stop-color="#5e5e5e"/></linearGradient></defs>
<polygon points="1021.8,274.3 953.6,377.6 910.4,516.7 980.6,431.3" fill="#0a0a0a"/>
<polygon points="1021.8,274.3 1180.5,355.3 1174.4,511.6 980.6,431.3" fill="url(#c1)"/>
<polygon points="980.6,431.3 1174.4,511.6 1070.7,574.1 910.4,516.7" fill="url(#c2)"/>
</svg><div style="left:656px;top:789px;width:784px;height:219px;background:linear-gradient(to bottom,#fbfbfb 0,#ededed 25%,#d9d9d9 55%,#c6c6c6 85%,#bdbdbd 100%);border-top:2px solid #9c9c9c;border-right:2px solid #fdfdfd"></div><div style="left:667px;top:812px;width:151px;height:75px;background:#fff;border:1px solid #000;box-shadow:3px 3px 1px rgba(40,40,40,.75)"></div><div style="left:672px;top:817px;width:12px;height:12px;background:#fff;border:1px solid #9a9a9a;border-right-color:#e0e0e0;border-bottom-color:#e0e0e0;box-shadow:inset 1px 1px 0 #5a5a5a"></div><svg style="left:672px;top:817px" width="12" height="12" viewBox="0 0 12 12"><path d="M2.6 5.2 L4.8 7.6 L9.2 2.8" fill="none" stroke="#000" stroke-width="1.7"/></svg><div style="left:688px;top:817px;width:22px;height:13px;background:#e00000;border:1px solid #000"></div><span class="t " style="left:716px;top:815px;letter-spacing:-0.51px;word-spacing:0.51px;font:11px/16px 'Liberation Sans',sans-serif;">CPU Usage</span><div style="left:672px;top:834px;width:12px;height:12px;background:#fff;border:1px solid #9a9a9a;border-right-color:#e0e0e0;border-bottom-color:#e0e0e0;box-shadow:inset 1px 1px 0 #5a5a5a"></div><div style="left:688px;top:834px;width:22px;height:13px;background:#4db83c;border:1px solid #000"></div><span class="t " style="left:716px;top:832px;letter-spacing:-0.18px;word-spacing:0.18px;font:11px/16px 'Liberation Sans',sans-serif;">Disk Space</span><div style="left:672px;top:851px;width:12px;height:12px;background:#fff;border:1px solid #9a9a9a;border-right-color:#e0e0e0;border-bottom-color:#e0e0e0;box-shadow:inset 1px 1px 0 #5a5a5a"></div><div style="left:688px;top:851px;width:22px;height:13px;background:#1f66c1;border:1px solid #000"></div><span class="t " style="left:716px;top:849px;letter-spacing:-0.26px;word-spacing:0.26px;font:11px/16px 'Liberation Sans',sans-serif;">Free Memory</span><div style="left:672px;top:868px;width:12px;height:12px;background:#fff;border:1px solid #9a9a9a;border-right-color:#e0e0e0;border-bottom-color:#e0e0e0;box-shadow:inset 1px 1px 0 #5a5a5a"></div><svg style="left:672px;top:868px" width="12" height="12" viewBox="0 0 12 12"><path d="M2.6 5.2 L4.8 7.6 L9.2 2.8" fill="none" stroke="#000" stroke-width="1.7"/></svg><div style="left:688px;top:868px;width:22px;height:13px;background:#ffff00;border:1px solid #000"></div><span class="t " style="left:716px;top:866px;letter-spacing:-0.11px;word-spacing:0.11px;font:11px/16px 'Liberation Sans',sans-serif;">Frames per Second</span><span class="t " style="left:669px;top:916px;letter-spacing:-0.21px;word-spacing:-0.12px;">Update Chart every</span><div style="left:669px;top:936px;width:38px;height:21px;background:#fff;border:1px solid #e3e9ef;border-top-color:#abadb3"></div><span class="t " style="left:673px;top:938px;letter-spacing:-0.69px;">3</span><svg style="left:690px;top:937px" width="17" height="19" viewBox="0 0 17 19"><rect x=".5" y=".5" width="15" height="8.4" fill="#f2f2f2" stroke="#c4c4c4"/><rect x=".5" y="9.9" width="15" height="8.4" fill="#ececec" stroke="#c4c4c4"/><path d="M5.4 6 L8 3.2 L10.6 6 Z M5.4 13 L8 15.8 L10.6 13 Z" fill="#4a5aa8"/></svg><span class="t " style="left:712px;top:938px;letter-spacing:-0.24px;">second(s)</span><span class="t " style="left:669px;top:967px;letter-spacing:-0.03px;word-spacing:-0.31px;">Test runtime:</span><span class="t " style="left:672px;top:983px;letter-spacing:-0.59px;">00:10:00</span><svg style="left:850px;top:795px" width="590" height="212" viewBox="850 795 590 212" font-family="Liberation Sans, sans-serif" font-size="9.4"><defs><linearGradient id="bw" x1="0" y1="0" x2="0" y2="1"><stop offset="0" stop-color="#f8f8f8"/><stop offset=".5" stop-color="#e4e4e4"/><stop offset="1" stop-color="#cbcbcb"/></linearGradient></defs><polygon points="908.5,816 919.5,805 919.5,984.5 908.5,995" fill="url(#bw)"/><rect x="919.5" y="805" width="444" height="179.5" fill="url(#bw)"/><polygon points="908.5,995 919.5,984.5 1363.5,984.5 1353,995" fill="#c9c9c9"/><path d="M920 967.5 H1363" stroke="#7a7a7a" stroke-width="1" stroke-dasharray="3 3"/><path d="M908.5 978.5 L919.5 967.5" stroke="#707070" stroke-width="1" stroke-dasharray="3 4" stroke-dashoffset="-1"/><path d="M920 950.5 H1363" stroke="#7a7a7a" stroke-width="1" stroke-dasharray="3 3"/><path d="M908.5 961.5 L919.5 950.5" stroke="#707070" stroke-width="1" stroke-dasharray="3 4" stroke-dashoffset="-1"/><path d="M920 933.5 H1363" stroke="#7a7a7a" stroke-width="1" stroke-dasharray="3 3"/><path d="M908.5 944.5 L919.5 933.5" stroke="#707070" stroke-width="1" stroke-dasharray="3 4" stroke-dashoffset="-1"/><path d="M920 916.5 H1363" stroke="#7a7a7a" stroke-width="1" stroke-dasharray="3 3"/><path d="M908.5 927.5 L919.5 916.5" stroke="#707070" stroke-width="1" stroke-dasharray="3 4" stroke-dashoffset="-1"/><path d="M920 900.5 H1363" stroke="#7a7a7a" stroke-width="1" stroke-dasharray="3 3"/><path d="M908.5 911.5 L919.5 900.5" stroke="#707070" stroke-width="1" stroke-dasharray="3 4" stroke-dashoffset="-1"/><path d="M920 883.5 H1363" stroke="#7a7a7a" stroke-width="1" stroke-dasharray="3 3"/><path d="M908.5 894.5 L919.5 883.5" stroke="#707070" stroke-width="1" stroke-dasharray="3 4" stroke-dashoffset="-1"/><path d="M920 866.5 H1363" stroke="#7a7a7a" stroke-width="1" stroke-dasharray="3 3"/><path d="M908.5 877.5 L919.5 866.5" stroke="#707070" stroke-width="1" stroke-dasharray="3 4" stroke-dashoffset="-1"/><path d="M920 849.5 H1363" stroke="#7a7a7a" stroke-width="1" stroke-dasharray="3 3"/><path d="M908.5 860.5 L919.5 849.5" stroke="#707070" stroke-width="1" stroke-dasharray="3 4" stroke-dashoffset="-1"/><path d="M920 832.5 H1363" stroke="#7a7a7a" stroke-width="1" stroke-dasharray="3 3"/><path d="M908.5 843.5 L919.5 832.5" stroke="#707070" stroke-width="1" stroke-dasharray="3 4" stroke-dashoffset="-1"/><path d="M920 895.5 H1363" stroke="#000" stroke-width="1" stroke-dasharray="3 3"/><path d="M913 811.5 L908.5 816 V995.5 H1353 L1363.5 984.5 V805 M908.5 995.5 L919.5 984.5 H1363.5 M919.5 984.5 V805" fill="none" stroke="#000" stroke-width="1"/><path d="M904 995.5 H908.5" stroke="#707070" stroke-width="1"/><path d="M906 987.5 H908.5" stroke="#707070" stroke-width="1"/><text x="901.5" y="997.8" text-anchor="end">0</text><path d="M904 978.5 H908.5" stroke="#707070" stroke-width="1"/><path d="M906 970.5 H908.5" stroke="#707070" stroke-width="1"/><text x="901.5" y="980.8" text-anchor="end">200</text><path d="M904 961.5 H908.5" stroke="#707070" stroke-width="1"/><path d="M906 953.5 H908.5" stroke="#707070" stroke-width="1"/><text x="901.5" y="963.9" text-anchor="end">400</text><path d="M904 944.5 H908.5" stroke="#707070" stroke-width="1"/><path d="M906 936.5 H908.5" stroke="#707070" stroke-width="1"/><text x="901.5" y="946.9" text-anchor="end">600</text><path d="M904 927.5 H908.5" stroke="#707070" stroke-width="1"/><path d="M906 919.5 H908.5" stroke="#707070" stroke-width="1"/><text x="901.5" y="930.0" text-anchor="end">800</text><path d="M904 910.5 H908.5" stroke="#707070" stroke-width="1"/><path d="M906 902.5 H908.5" stroke="#707070" stroke-width="1"/><text x="901.5" y="913.0" text-anchor="end">1 000</text><path d="M904 894.5 H908.5" stroke="#707070" stroke-width="1"/><path d="M906 886.5 H908.5" stroke="#707070" stroke-width="1"/><text x="901.5" y="896.1" text-anchor="end">1 200</text><path d="M904 877.5 H908.5" stroke="#707070" stroke-width="1"/><path d="M906 869.5 H908.5" stroke="#707070" stroke-width="1"/><text x="901.5" y="879.1" text-anchor="end">1 400</text><path d="M904 860.5 H908.5" stroke="#707070" stroke-width="1"/><path d="M906 852.5 H908.5" stroke="#707070" stroke-width="1"/><text x="901.5" y="862.2" text-anchor="end">1 600</text><path d="M904 843.5 H908.5" stroke="#707070" stroke-width="1"/><path d="M906 835.5 H908.5" stroke="#707070" stroke-width="1"/><text x="901.5" y="845.2" text-anchor="end">1 800</text><path d="M904 826.5 H908.5" stroke="#707070" stroke-width="1"/><text x="901.5" y="828.3" text-anchor="end">2 000</text><path d="M1363.5 984.5 H1370" stroke="#000" stroke-width="1"/><text x="1372" y="987.1">0 %</text><path d="M1363.5 966.5 H1370" stroke="#000" stroke-width="1"/><text x="1372" y="969.1">10 %</text><path d="M1363.5 948.5 H1370" stroke="#000" stroke-width="1"/><text x="1372" y="951.1">20 %</text><path d="M1363.5 930.5 H1370" stroke="#000" stroke-width="1"/><text x="1372" y="933.1">30 %</text><path d="M1363.5 912.5 H1370" stroke="#000" stroke-width="1"/><text x="1372" y="915.1">40 %</text><path d="M1363.5 894.5 H1370" stroke="#000" stroke-width="1"/><text x="1372" y="897.1">50 %</text><path d="M1363.5 876.5 H1370" stroke="#000" stroke-width="1"/><text x="1372" y="879.1">60 %</text><path d="M1363.5 858.5 H1370" stroke="#000" stroke-width="1"/><text x="1372" y="861.1">70 %</text><path d="M1363.5 841.5 H1370" stroke="#000" stroke-width="1"/><text x="1372" y="844.1">80 %</text><path d="M1363.5 823.5 H1370" stroke="#000" stroke-width="1"/><text x="1372" y="826.1">90 %</text><path d="M1363.5 805.5 H1370" stroke="#000" stroke-width="1"/><text x="1372" y="808.1">100 %</text><text x="868" y="905" text-anchor="middle" transform="rotate(-90 868 905)" dy="4">FPS</text><text x="1408" y="893" text-anchor="middle" transform="rotate(90 1408 893)" dy="4" font-size="11.5">CPU Usage</text><polygon points="919.5,805.5 930.6,805.5 941.7,805.5 952.8,805.5 963.9,805.5 975.0,805.5 986.1,805.5 997.2,805.5 1008.3,805.5 1019.4,805.5 1030.5,805.5 1041.6,805.5 1052.7,805.5 1063.8,805.5 1074.9,805.5 1086.0,805.5 1097.1,805.5 1108.2,805.5 1119.3,805.5 1130.4,805.5 1141.5,805.5 1152.6,805.5 1163.7,805.5 1174.8,805.5 1185.9,805.5 1197.0,805.5 1208.1,805.5 1219.2,805.5 1230.3,805.5 1241.4,805.5 1252.5,805.5 1263.6,805.5 1274.7,805.5 1285.8,805.5 1296.9,805.5 1308.0,805.5 1319.1,805.5 1330.2,805.5 1341.3,805.5 1352.4,805.5 1363.5,805.5 1357.2,811.7 1346.1,811.7 1335.0,811.7 1323.9,811.7 1312.8,811.7 1301.7,811.7 1290.6,811.7 1279.5,811.7 1268.4,811.7 1257.3,811.7 1246.2,811.7 1235.1,811.7 1224.0,811.7 1212.9,811.7 1201.8,811.7 1190.7,811.7 1179.6,811.7 1168.5,811.7 1157.4,811.7 1146.3,811.7 1135.2,811.7 1124.1,811.7 1113.0,811.7 1101.9,811.7 1090.8,811.7 1079.7,811.7 1068.6,811.7 1057.5,811.7 1046.4,811.7 1035.3,811.7 1024.2,811.7 1013.1,811.7 1002.0,811.7 990.9,811.7 979.8,811.7 968.7,811.7 957.6,811.7 946.5,811.7 935.4,811.7 924.3,811.7 913.2,811.7" fill="#e00000"/><polygon points="913.2,811.7 924.3,811.7 935.4,811.7 946.5,811.7 957.6,811.7 968.7,811.7 979.8,811.7 990.9,811.7 1002.0,811.7 1013.1,811.7 1024.2,811.7 1035.3,811.7 1046.4,811.7 1057.5,811.7 1068.6,811.7 1079.7,811.7 1090.8,811.7 1101.9,811.7 1113.0,811.7 1124.1,811.7 1135.2,811.7 1146.3,811.7 1157.4,811.7 1168.5,811.7 1179.6,811.7 1190.7,811.7 1201.8,811.7 1212.9,811.7 1224.0,811.7 1235.1,811.7 1246.2,811.7 1257.3,811.7 1268.4,811.7 1279.5,811.7 1290.6,811.7 1301.7,811.7 1312.8,811.7 1323.9,811.7 1335.0,811.7 1346.1,811.7 1357.2,811.7 1357.2,814.7 1346.1,814.7 1335.0,814.7 1323.9,814.7 1312.8,814.7 1301.7,814.7 1290.6,814.7 1279.5,814.7 1268.4,814.7 1257.3,814.7 1246.2,814.7 1235.1,814.7 1224.0,814.7 1212.9,814.7 1201.8,814.7 1190.7,814.7 1179.6,814.7 1168.5,814.7 1157.4,814.7 1146.3,814.7 1135.2,814.7 1124.1,814.7 1113.0,814.7 1101.9,814.7 1090.8,814.7 1079.7,814.7 1068.6,814.7 1057.5,814.7 1046.4,814.7 1035.3,814.7 1024.2,814.7 1013.1,814.7 1002.0,814.7 990.9,814.7 979.8,814.7 968.7,814.7 957.6,814.7 946.5,814.7 935.4,814.7 924.3,814.7 913.2,814.7" fill="#c40000"/><path d="M919.5 805.5 L930.6 805.5 L941.7 805.5 L952.8 805.5 L963.9 805.5 L975.0 805.5 L986.1 805.5 L997.2 805.5 L1008.3 805.5 L1019.4 805.5 L1030.5 805.5 L1041.6 805.5 L1052.7 805.5 L1063.8 805.5 L1074.9 805.5 L1086.0 805.5 L1097.1 805.5 L1108.2 805.5 L1119.3 805.5 L1130.4 805.5 L1141.5 805.5 L1152.6 805.5 L1163.7 805.5 L1174.8 805.5 L1185.9 805.5 L1197.0 805.5 L1208.1 805.5 L1219.2 805.5 L1230.3 805.5 L1241.4 805.5 L1252.5 805.5 L1263.6 805.5 L1274.7 805.5 L1285.8 805.5 L1296.9 805.5 L1308.0 805.5 L1319.1 805.5 L1330.2 805.5 L1341.3 805.5 L1352.4 805.5 L1363.5 805.5 M913.2 811.7 L924.3 811.7 L935.4 811.7 L946.5 811.7 L957.6 811.7 L968.7 811.7 L979.8 811.7 L990.9 811.7 L1002.0 811.7 L1013.1 811.7 L1024.2 811.7 L1035.3 811.7 L1046.4 811.7 L1057.5 811.7 L1068.6 811.7 L1079.7 811.7 L1090.8 811.7 L1101.9 811.7 L1113.0 811.7 L1124.1 811.7 L1135.2 811.7 L1146.3 811.7 L1157.4 811.7 L1168.5 811.7 L1179.6 811.7 L1190.7 811.7 L1201.8 811.7 L1212.9 811.7 L1224.0 811.7 L1235.1 811.7 L1246.2 811.7 L1257.3 811.7 L1268.4 811.7 L1279.5 811.7 L1290.6 811.7 L1301.7 811.7 L1312.8 811.7 L1323.9 811.7 L1335.0 811.7 L1346.1 811.7 L1357.2 811.7 M913.2 814.7 L924.3 814.7 L935.4 814.7 L946.5 814.7 L957.6 814.7 L968.7 814.7 L979.8 814.7 L990.9 814.7 L1002.0 814.7 L1013.1 814.7 L1024.2 814.7 L1035.3 814.7 L1046.4 814.7 L1057.5 814.7 L1068.6 814.7 L1079.7 814.7 L1090.8 814.7 L1101.9 814.7 L1113.0 814.7 L1124.1 814.7 L1135.2 814.7 L1146.3 814.7 L1157.4 814.7 L1168.5 814.7 L1179.6 814.7 L1190.7 814.7 L1201.8 814.7 L1212.9 814.7 L1224.0 814.7 L1235.1 814.7 L1246.2 814.7 L1257.3 814.7 L1268.4 814.7 L1279.5 814.7 L1290.6 814.7 L1301.7 814.7 L1312.8 814.7 L1323.9 814.7 L1335.0 814.7 L1346.1 814.7 L1357.2 814.7 M919.5 805.5 L913.2 811.7 V814.7 M930.6 805.5 L924.3 811.7 V814.7 M941.7 805.5 L935.4 811.7 V814.7 M952.8 805.5 L946.5 811.7 V814.7 M963.9 805.5 L957.6 811.7 V814.7 M975.0 805.5 L968.7 811.7 V814.7 M986.1 805.5 L979.8 811.7 V814.7 M997.2 805.5 L990.9 811.7 V814.7 M1008.3 805.5 L1002.0 811.7 V814.7 M1019.4 805.5 L1013.1 811.7 V814.7 M1030.5 805.5 L1024.2 811.7 V814.7 M1041.6 805.5 L1035.3 811.7 V814.7 M1052.7 805.5 L1046.4 811.7 V814.7 M1063.8 805.5 L1057.5 811.7 V814.7 M1074.9 805.5 L1068.6 811.7 V814.7 M1086.0 805.5 L1079.7 811.7 V814.7 M1097.1 805.5 L1090.8 811.7 V814.7 M1108.2 805.5 L1101.9 811.7 V814.7 M1119.3 805.5 L1113.0 811.7 V814.7 M1130.4 805.5 L1124.1 811.7 V814.7 M1141.5 805.5 L1135.2 811.7 V814.7 M1152.6 805.5 L1146.3 811.7 V814.7 M1163.7 805.5 L1157.4 811.7 V814.7 M1174.8 805.5 L1168.5 811.7 V814.7 M1185.9 805.5 L1179.6 811.7 V814.7 M1197.0 805.5 L1190.7 811.7 V814.7 M1208.1 805.5 L1201.8 811.7 V814.7 M1219.2 805.5 L1212.9 811.7 V814.7 M1230.3 805.5 L1224.0 811.7 V814.7 M1241.4 805.5 L1235.1 811.7 V814.7 M1252.5 805.5 L1246.2 811.7 V814.7 M1263.6 805.5 L1257.3 811.7 V814.7 M1274.7 805.5 L1268.4 811.7 V814.7 M1285.8 805.5 L1279.5 811.7 V814.7 M1296.9 805.5 L1290.6 811.7 V814.7 M1308.0 805.5 L1301.7 811.7 V814.7 M1319.1 805.5 L1312.8 811.7 V814.7 M1330.2 805.5 L1323.9 811.7 V814.7 M1341.3 805.5 L1335.0 811.7 V814.7 M1352.4 805.5 L1346.1 811.7 V814.7 M1363.5 805.5 L1357.2 811.7 V814.7" fill="none" stroke="#000" stroke-width="1"/><polygon points="913.2,819.8 924.3,819.8 935.5,819.8 946.6,819.8 957.8,819.8 968.9,819.8 980.0,819.8 991.2,819.8 993.5,820.8 1002.3,820.8 1013.5,820.8 1024.6,820.8 1035.7,820.8 1046.9,820.8 1058.0,820.8 1069.2,820.8 1080.3,820.8 1091.4,820.8 1102.6,820.8 1113.7,820.8 1124.9,820.8 1136.0,820.8 1147.1,820.8 1158.3,820.8 1169.4,820.8 1180.6,820.8 1191.7,820.8 1202.8,820.8 1214.0,820.8 1225.1,820.8 1236.3,820.8 1247.4,820.8 1258.5,820.8 1269.7,820.8 1280.8,820.8 1292.0,820.8 1303.1,820.8 1314.2,820.8 1325.4,820.8 1336.5,820.8 1347.7,820.8 1358.8,820.8 1354.0,826.3 1342.9,826.3 1331.7,826.3 1320.6,826.3 1309.4,826.3 1298.3,826.3 1287.2,826.3 1276.0,826.3 1264.9,826.3 1253.7,826.3 1242.6,826.3 1231.5,826.3 1220.3,826.3 1209.2,826.3 1198.0,826.3 1186.9,826.3 1175.8,826.3 1164.6,826.3 1153.5,826.3 1142.3,826.3 1131.2,826.3 1120.1,826.3 1108.9,826.3 1097.8,826.3 1086.6,826.3 1075.5,826.3 1064.4,826.3 1053.2,826.3 1042.1,826.3 1030.9,826.3 1019.8,826.3 1008.7,826.3 997.5,826.3 988.7,826.3 986.4,825.3 975.2,825.3 964.1,825.3 953.0,825.3 941.8,825.3 930.7,825.3 919.5,825.3 908.4,825.3" fill="#ffff00"/><polygon points="908.4,825.3 919.5,825.3 930.7,825.3 941.8,825.3 953.0,825.3 964.1,825.3 975.2,825.3 986.4,825.3 988.7,826.3 997.5,826.3 1008.7,826.3 1019.8,826.3 1030.9,826.3 1042.1,826.3 1053.2,826.3 1064.4,826.3 1075.5,826.3 1086.6,826.3 1097.8,826.3 1108.9,826.3 1120.1,826.3 1131.2,826.3 1142.3,826.3 1153.5,826.3 1164.6,826.3 1175.8,826.3 1186.9,826.3 1198.0,826.3 1209.2,826.3 1220.3,826.3 1231.5,826.3 1242.6,826.3 1253.7,826.3 1264.9,826.3 1276.0,826.3 1287.2,826.3 1298.3,826.3 1309.4,826.3 1320.6,826.3 1331.7,826.3 1342.9,826.3 1354.0,826.3 1354.0,829.5 1342.9,829.5 1331.7,829.5 1320.6,829.5 1309.4,829.5 1298.3,829.5 1287.2,829.5 1276.0,829.5 1264.9,829.5 1253.7,829.5 1242.6,829.5 1231.5,829.5 1220.3,829.5 1209.2,829.5 1198.0,829.5 1186.9,829.5 1175.8,829.5 1164.6,829.5 1153.5,829.5 1142.3,829.5 1131.2,829.5 1120.1,829.5 1108.9,829.5 1097.8,829.5 1086.6,829.5 1075.5,829.5 1064.4,829.5 1053.2,829.5 1042.1,829.5 1030.9,829.5 1019.8,829.5 1008.7,829.5 997.5,829.5 988.7,829.5 986.4,828.5 975.2,828.5 964.1,828.5 953.0,828.5 941.8,828.5 930.7,828.5 919.5,828.5 908.4,828.5" fill="#e6e600"/><path d="M913.2 819.8 L924.3 819.8 L935.5 819.8 L946.6 819.8 L957.8 819.8 L968.9 819.8 L980.0 819.8 L991.2 819.8 L993.5 820.8 L1002.3 820.8 L1013.5 820.8 L1024.6 820.8 L1035.7 820.8 L1046.9 820.8 L1058.0 820.8 L1069.2 820.8 L1080.3 820.8 L1091.4 820.8 L1102.6 820.8 L1113.7 820.8 L1124.9 820.8 L1136.0 820.8 L1147.1 820.8 L1158.3 820.8 L1169.4 820.8 L1180.6 820.8 L1191.7 820.8 L1202.8 820.8 L1214.0 820.8 L1225.1 820.8 L1236.3 820.8 L1247.4 820.8 L1258.5 820.8 L1269.7 820.8 L1280.8 820.8 L1292.0 820.8 L1303.1 820.8 L1314.2 820.8 L1325.4 820.8 L1336.5 820.8 L1347.7 820.8 L1358.8 820.8 M908.4 825.3 L919.5 825.3 L930.7 825.3 L941.8 825.3 L953.0 825.3 L964.1 825.3 L975.2 825.3 L986.4 825.3 L988.7 826.3 L997.5 826.3 L1008.7 826.3 L1019.8 826.3 L1030.9 826.3 L1042.1 826.3 L1053.2 826.3 L1064.4 826.3 L1075.5 826.3 L1086.6 826.3 L1097.8 826.3 L1108.9 826.3 L1120.1 826.3 L1131.2 826.3 L1142.3 826.3 L1153.5 826.3 L1164.6 826.3 L1175.8 826.3 L1186.9 826.3 L1198.0 826.3 L1209.2 826.3 L1220.3 826.3 L1231.5 826.3 L1242.6 826.3 L1253.7 826.3 L1264.9 826.3 L1276.0 826.3 L1287.2 826.3 L1298.3 826.3 L1309.4 826.3 L1320.6 826.3 L1331.7 826.3 L1342.9 826.3 L1354.0 826.3 M908.4 828.5 L919.5 828.5 L930.7 828.5 L941.8 828.5 L953.0 828.5 L964.1 828.5 L975.2 828.5 L986.4 828.5 L988.7 829.5 L997.5 829.5 L1008.7 829.5 L1019.8 829.5 L1030.9 829.5 L1042.1 829.5 L1053.2 829.5 L1064.4 829.5 L1075.5 829.5 L1086.6 829.5 L1097.8 829.5 L1108.9 829.5 L1120.1 829.5 L1131.2 829.5 L1142.3 829.5 L1153.5 829.5 L1164.6 829.5 L1175.8 829.5 L1186.9 829.5 L1198.0 829.5 L1209.2 829.5 L1220.3 829.5 L1231.5 829.5 L1242.6 829.5 L1253.7 829.5 L1264.9 829.5 L1276.0 829.5 L1287.2 829.5 L1298.3 829.5 L1309.4 829.5 L1320.6 829.5 L1331.7 829.5 L1342.9 829.5 L1354.0 829.5 M913.2 819.8 L908.4 825.3 V828.5 M924.3 819.8 L919.5 825.3 V828.5 M935.5 819.8 L930.7 825.3 V828.5 M946.6 819.8 L941.8 825.3 V828.5 M957.8 819.8 L953.0 825.3 V828.5 M968.9 819.8 L964.1 825.3 V828.5 M980.0 819.8 L975.2 825.3 V828.5 M991.2 819.8 L986.4 825.3 V828.5 M1002.3 820.8 L997.5 826.3 V829.5 M1013.5 820.8 L1008.7 826.3 V829.5 M1024.6 820.8 L1019.8 826.3 V829.5 M1035.7 820.8 L1030.9 826.3 V829.5 M1046.9 820.8 L1042.1 826.3 V829.5 M1058.0 820.8 L1053.2 826.3 V829.5 M1069.2 820.8 L1064.4 826.3 V829.5 M1080.3 820.8 L1075.5 826.3 V829.5 M1091.4 820.8 L1086.6 826.3 V829.5 M1102.6 820.8 L1097.8 826.3 V829.5 M1113.7 820.8 L1108.9 826.3 V829.5 M1124.9 820.8 L1120.1 826.3 V829.5 M1136.0 820.8 L1131.2 826.3 V829.5 M1147.1 820.8 L1142.3 826.3 V829.5 M1158.3 820.8 L1153.5 826.3 V829.5 M1169.4 820.8 L1164.6 826.3 V829.5 M1180.6 820.8 L1175.8 826.3 V829.5 M1191.7 820.8 L1186.9 826.3 V829.5 M1202.8 820.8 L1198.0 826.3 V829.5 M1214.0 820.8 L1209.2 826.3 V829.5 M1225.1 820.8 L1220.3 826.3 V829.5 M1236.3 820.8 L1231.5 826.3 V829.5 M1247.4 820.8 L1242.6 826.3 V829.5 M1258.5 820.8 L1253.7 826.3 V829.5 M1269.7 820.8 L1264.9 826.3 V829.5 M1280.8 820.8 L1276.0 826.3 V829.5 M1292.0 820.8 L1287.2 826.3 V829.5 M1303.1 820.8 L1298.3 826.3 V829.5 M1314.2 820.8 L1309.4 826.3 V829.5 M1325.4 820.8 L1320.6 826.3 V829.5 M1336.5 820.8 L1331.7 826.3 V829.5 M1347.7 820.8 L1342.9 826.3 V829.5 M1358.8 820.8 L1354.0 826.3 V829.5" fill="none" stroke="#000" stroke-width="1"/></svg><div style="left:656px;top:1008px;width:784px;height:21px;background:#f0f0f0;border-top:1px solid #d7d7d7"></div><div style="left:657px;top:1009px;width:97px;height:19px;background:linear-gradient(to bottom,#e2e2e2,#c2c2c2);border:1px solid #a8a8a8"></div><div style="left:658px;top:1010px;width:85px;height:17px;background:linear-gradient(to right,rgba(0,90,20,.25) 0,rgba(0,90,20,0) 8%,rgba(0,90,20,0) 90%,rgba(0,90,20,.3) 100%),linear-gradient(to bottom,#c8f8cc 0,#a0efaa 30%,#22d644 36%,#00d42a 65%,#14c636 100%)"></div><div style="left:760px;top:1011px;width:1px;height:17px;background:#d0d0d0"></div><div style="left:888px;top:1011px;width:1px;height:17px;background:#d0d0d0"></div><div style="left:985px;top:1011px;width:1px;height:17px;background:#d0d0d0"></div><div style="left:1039px;top:1011px;width:1px;height:17px;background:#d0d0d0"></div><span class="t " style="left:766px;top:1012px;letter-spacing:-0.24px;word-spacing:-0.10px;">1159 MB Memory Free</span><span class="t " style="left:892px;top:1012px;letter-spacing:-0.73px;word-spacing:0.39px;">100% CPU Usage</span><span class="t " style="left:989px;top:1012px;letter-spacing:-1.01px;word-spacing:0.67px;">1998 FPS</span></body></html>
